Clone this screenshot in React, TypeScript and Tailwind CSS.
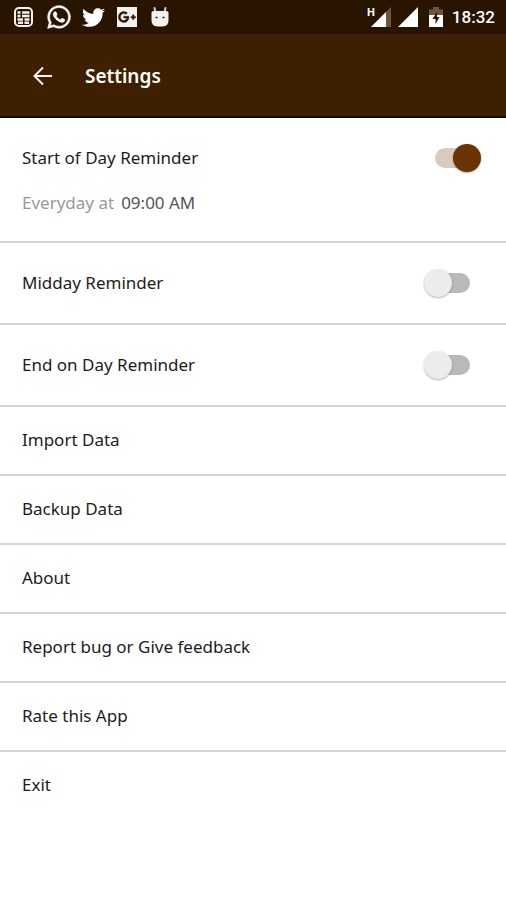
import { useState } from "react";
import type { ReactNode } from "react";
import { FaGooglePlusG, FaTwitter, FaWhatsapp } from "react-icons/fa6";

type ReminderKey = "start" | "midday" | "end";

const menuItems = [
  "Import Data",
  "Backup Data",
  "About",
  "Report bug or Give feedback",
  "Rate this App",
  "Exit",
];

const MessengerIcon = () => (
  <svg viewBox="0 0 20 20" className="w-5 h-5" fill="none" stroke="#f4f1ee">
    <rect x="1" y="1" width="17" height="18" rx="4" strokeWidth="2" />
    <path
      d="M3.500 5.500H6.500M8 5.500H15.500M3.500 9H6.500M8 9H15.500M3.500 12.500H9M10.500 12.500H15.500M4 15.800H9M10.500 15.800H15"
      strokeWidth="2.400"
    />
  </svg>
);

const AndroidIcon = () => (
  <svg viewBox="0 0 18 22" className="w-[18px] h-[22px]" fill="#f4f1ee">
    <path d="M3.500 2 4.500 6M14.500 2 13.500 6" stroke="#d8d0c8" strokeWidth="2" strokeLinecap="round" />
    <path d="M0.500 7Q0.500 5 2.500 5H15.500Q17.500 5 17.500 7V14Q17.500 20.500 11.500 20.500H6.500Q0.500 20.500 0.500 14Z" />
    <path d="M4.500 11.500H6.500M11.500 11.500H13.500" stroke="#291400" strokeWidth="1.500" />
  </svg>
);

const WeakSignalIcon = () => (
  <svg viewBox="0 0 20 20" className="w-5 h-5">
    <path d="M0 20 20 0V20Z" fill="#6c5440" />
    <path d="M0 20 15 5V20Z" fill="#ffffff" />
  </svg>
);

const SignalIcon = () => (
  <svg viewBox="0 0 20 20" className="w-5 h-5">
    <path d="M0 20 20 0V20Z" fill="#ffffff" />
  </svg>
);

const BatteryIcon = () => (
  <svg viewBox="0 0 14 20" className="w-3.5 h-5">
    <path d="M0 2.500H4V0H10V2.500H14V20H0Z" fill="#6c5440" />
    <path d="M0 8H14V20H0Z" fill="#ffffff" />
    <path d="M8 5 3.500 12H6.500V17L10.500 10H8Z" fill="#291400" />
  </svg>
);

const BackIcon = () => (
  <svg viewBox="0 0 20 20" className="w-5 h-5" fill="none" stroke="#f4f1ee" strokeWidth="2">
    <path d="M10 1.500 1.500 10 10 18.500M1.500 10H19" />
  </svg>
);

const StatusBar = () => (
  <div className="flex items-center justify-between h-[34px] pl-[14px] pr-[11px] bg-[#291400] text-white">
    <div className="flex items-center gap-3">
      <MessengerIcon />
      <FaWhatsapp className="w-[26px] h-[26px] -mr-0.5" stroke="currentColor" strokeWidth="12" />
      <FaTwitter className="w-[23px] h-[23px]" />
      <span className="flex items-center justify-center w-5 h-5 bg-[#f4f1ee]">
        <FaGooglePlusG
          className="w-[18px] h-[18px] text-[#291400]"
          stroke="currentColor"
          strokeWidth="12"
        />
      </span>
      <span className="ml-0.5">
        <AndroidIcon />
      </span>
    </div>
    <div className="flex items-center">
      <div className="relative">
        <span className="absolute -left-1 -top-px text-[11px] leading-3 font-bold">H</span>
        <WeakSignalIcon />
      </div>
      <div className="ml-[7px]">
        <SignalIcon />
      </div>
      <div className="ml-[11px]">
        <BatteryIcon />
      </div>
      <span className="ml-[9px] text-[17px] leading-6 font-medium font-[Roboto,sans-serif]">18:32</span>
    </div>
  </div>
);

type ReminderRowProps = {
  id: string;
  label: string;
  checked: boolean;
  onToggle: () => void;
  children?: ReactNode;
};

const ReminderRow = ({ id, label, checked, onToggle, children }: ReminderRowProps) => (
  <li className="py-[26px] pl-[22px] pr-[25px] border-b-2 border-[#d6d6d6]">
    <div className="flex items-center justify-between h-7">
      <label htmlFor={id}>{label}</label>
      <span className="relative flex items-center w-[57px] h-7">
        <input
          id={id}
          type="checkbox"
          role="switch"
          checked={checked}
          onChange={onToggle}
          className="mx-auto w-[35px] h-5 rounded-full appearance-none cursor-pointer bg-[#b9b9b9] checked:bg-[#d8cabc]"
        />
        <span
          className={`absolute top-0 w-7 h-7 rounded-full pointer-events-none shadow-[0_1px_2px_rgba(0,0,0,0.3)] ${
            checked ? "right-0 bg-[#6b3300]" : "left-0 bg-[#ececec]"
          }`}
        />
      </span>
    </div>
    {children}
  </li>
);

const App = () => {
  const [reminders, setReminders] = useState({
    start: true,
    midday: false,
    end: false,
  });

  const toggle = (key: ReminderKey) => {
    setReminders((prev) => ({ ...prev, [key]: !prev[key] }));
  };

  return (
    <div className="min-h-screen bg-white text-[#1c1c1c] text-[17px] leading-6 font-['Noto_Sans',sans-serif]">
      <StatusBar />
      <header className="flex items-center h-[84px] pt-0.5 pl-[33px] gap-8 bg-[#3e1f00] border-b-2 border-[#1a0a00] text-white">
        <button type="button" aria-label="Back" className="cursor-pointer">
          <BackIcon />
        </button>
        <h1 className="text-[19px] leading-7 font-semibold">Settings</h1>
      </header>
      <main>
        <ul>
          <ReminderRow
            id="start"
            label="Start of Day Reminder"
            checked={reminders.start}
            onToggle={() => toggle("start")}
          >
            <p className="flex gap-[7px] mt-[19px] text-[#999999]">
              Everyday at
              <button type="button" className="text-[#555555] cursor-pointer">
                09:00 AM
              </button>
            </p>
          </ReminderRow>
          <ReminderRow
            id="midday"
            label="Midday Reminder"
            checked={reminders.midday}
            onToggle={() => toggle("midday")}
          />
          <ReminderRow
            id="end"
            label="End on Day Reminder"
            checked={reminders.end}
            onToggle={() => toggle("end")}
          />
          {menuItems.map((item) => (
            <li key={item} className="border-b-2 border-[#d6d6d6] last:border-b-0">
              <button type="button" className="block w-full h-[67px] px-[22px] pb-0.5 text-left cursor-pointer">
                {item}
              </button>
            </li>
          ))}
        </ul>
      </main>
    </div>
  );
};

export default App;
